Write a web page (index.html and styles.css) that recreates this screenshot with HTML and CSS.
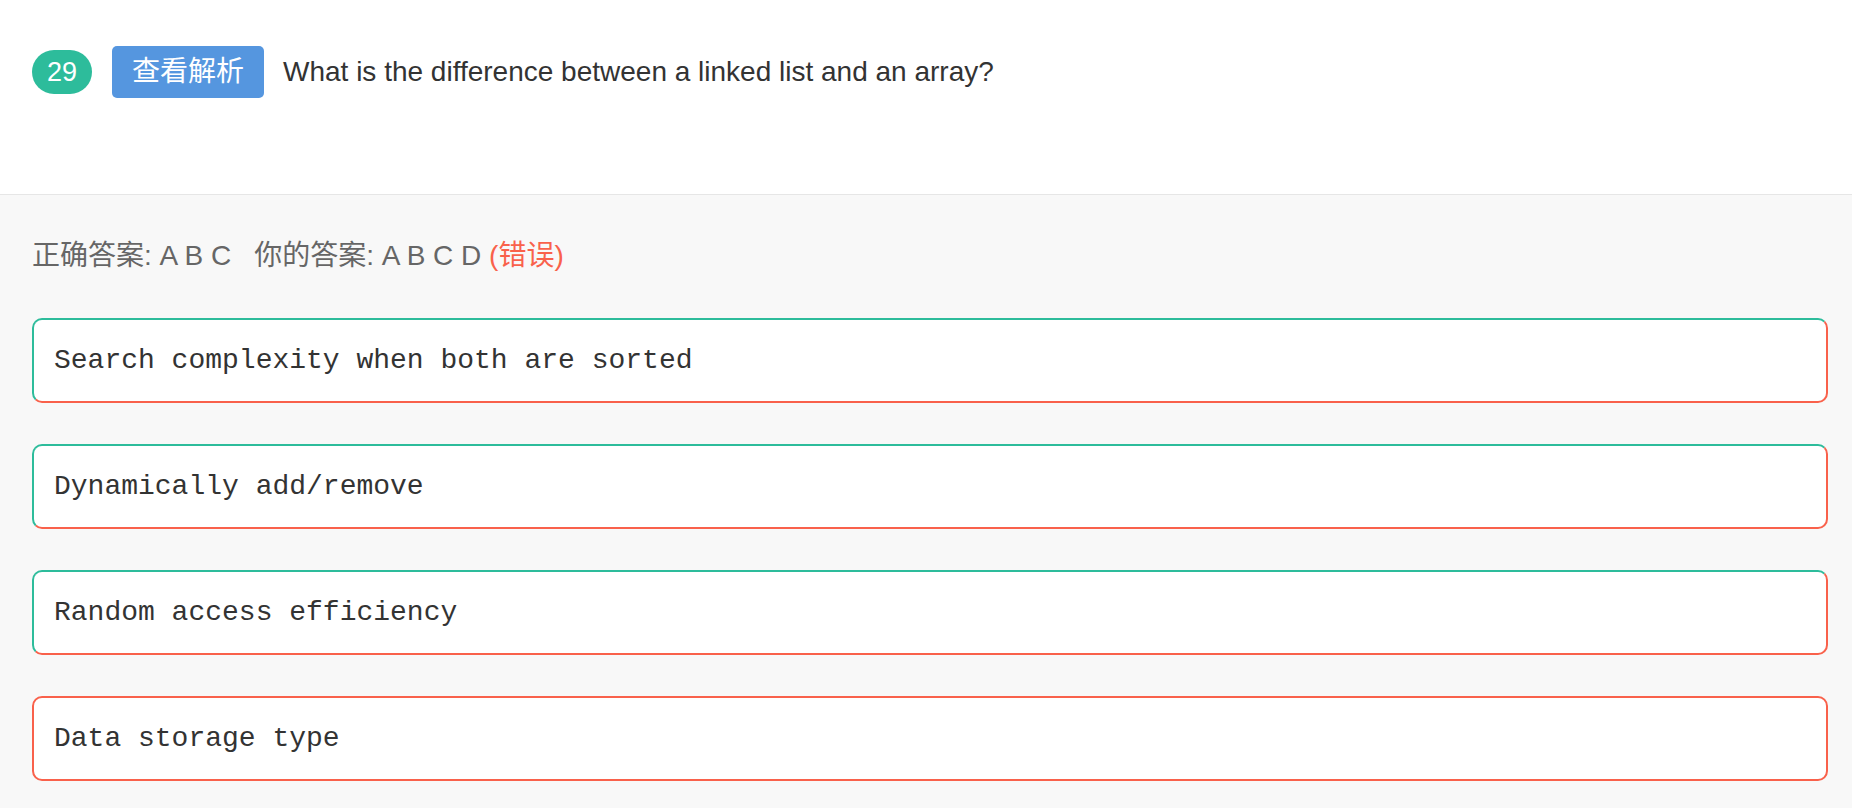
FILE: index.html
```html
<!DOCTYPE html>
<html lang="zh">
<head>
<meta charset="utf-8">
<title>Question 29</title>
<link rel="stylesheet" href="styles.css">
</head>
<body>
<header class="question-head">
  <span class="q-num">29</span>
  <button class="q-btn" type="button">查看解析</button>
  <span class="q-title">What is the difference between a linked list and an array?</span>
</header>
<main class="answers">
  <div class="answer-line"><span>正确答案: A B C</span><span class="mine">你的答案: A B C D <span class="wrong">(错误)</span></span></div>
  <div class="option opt-mixed">Search complexity when both are sorted</div>
  <div class="option opt-mixed">Dynamically add/remove</div>
  <div class="option opt-mixed">Random access efficiency</div>
  <div class="option opt-wrong">Data storage type</div>
</main>
</body>
</html>
```
FILE: styles.css
```css
html, body {
  margin: 0;
  padding: 0;
}
body {
  background: #f8f8f8;
  font-family: "Liberation Sans", Arial, "Noto Sans CJK SC", sans-serif;
  min-height: 808px;
}
.question-head {
  background: #ffffff;
  border-bottom: 1px solid #e6e6e6;
  height: 195px;
  box-sizing: border-box;
  padding: 46px 24px 0 32px;
  display: flex;
  align-items: flex-start;
}
.q-num {
  margin-top: 4px;
  height: 44px;
  min-width: 60px;
  box-sizing: border-box;
  border-radius: 22px;
  background: #2dbc9b;
  color: #ffffff;
  font-size: 27px;
  line-height: 44px;
  text-align: center;
  padding: 0 14px;
}
.q-btn {
  margin-left: 20px;
  height: 52px;
  box-sizing: border-box;
  border: none;
  border-radius: 5px;
  background: #5596df;
  color: #ffffff;
  font-family: "Liberation Sans", "Noto Sans CJK SC", sans-serif;
  font-size: 28px;
  line-height: 52px;
  padding: 0 20px;
}
.q-title {
  margin-left: 19px;
  color: #333333;
  font-size: 28px;
  line-height: 52px;
}
.answers {
  padding: 40px 24px 26px 32px;
  display: flex;
  flex-direction: column;
  gap: 41px;
}
.answer-line {
  color: #666666;
  font-size: 28px;
  line-height: 42px;
}
.mine {
  margin-left: 23px;
}
.wrong {
  color: #f9614b;
}
.option {
  background: #ffffff;
  border: 2px solid #2dbc9b;
  border-radius: 10px;
  padding: 20px 20px;
  font-family: "Liberation Mono", "Courier New", monospace;
  font-size: 28px;
  line-height: 41px;
  color: #333333;
}
.opt-mixed {
  border-top-color: #2dbc9b;
  border-left-color: #2dbc9b;
  border-right-color: #f9614b;
  border-bottom-color: #f9614b;
}
.opt-wrong {
  border-color: #f9614b;
}
```
